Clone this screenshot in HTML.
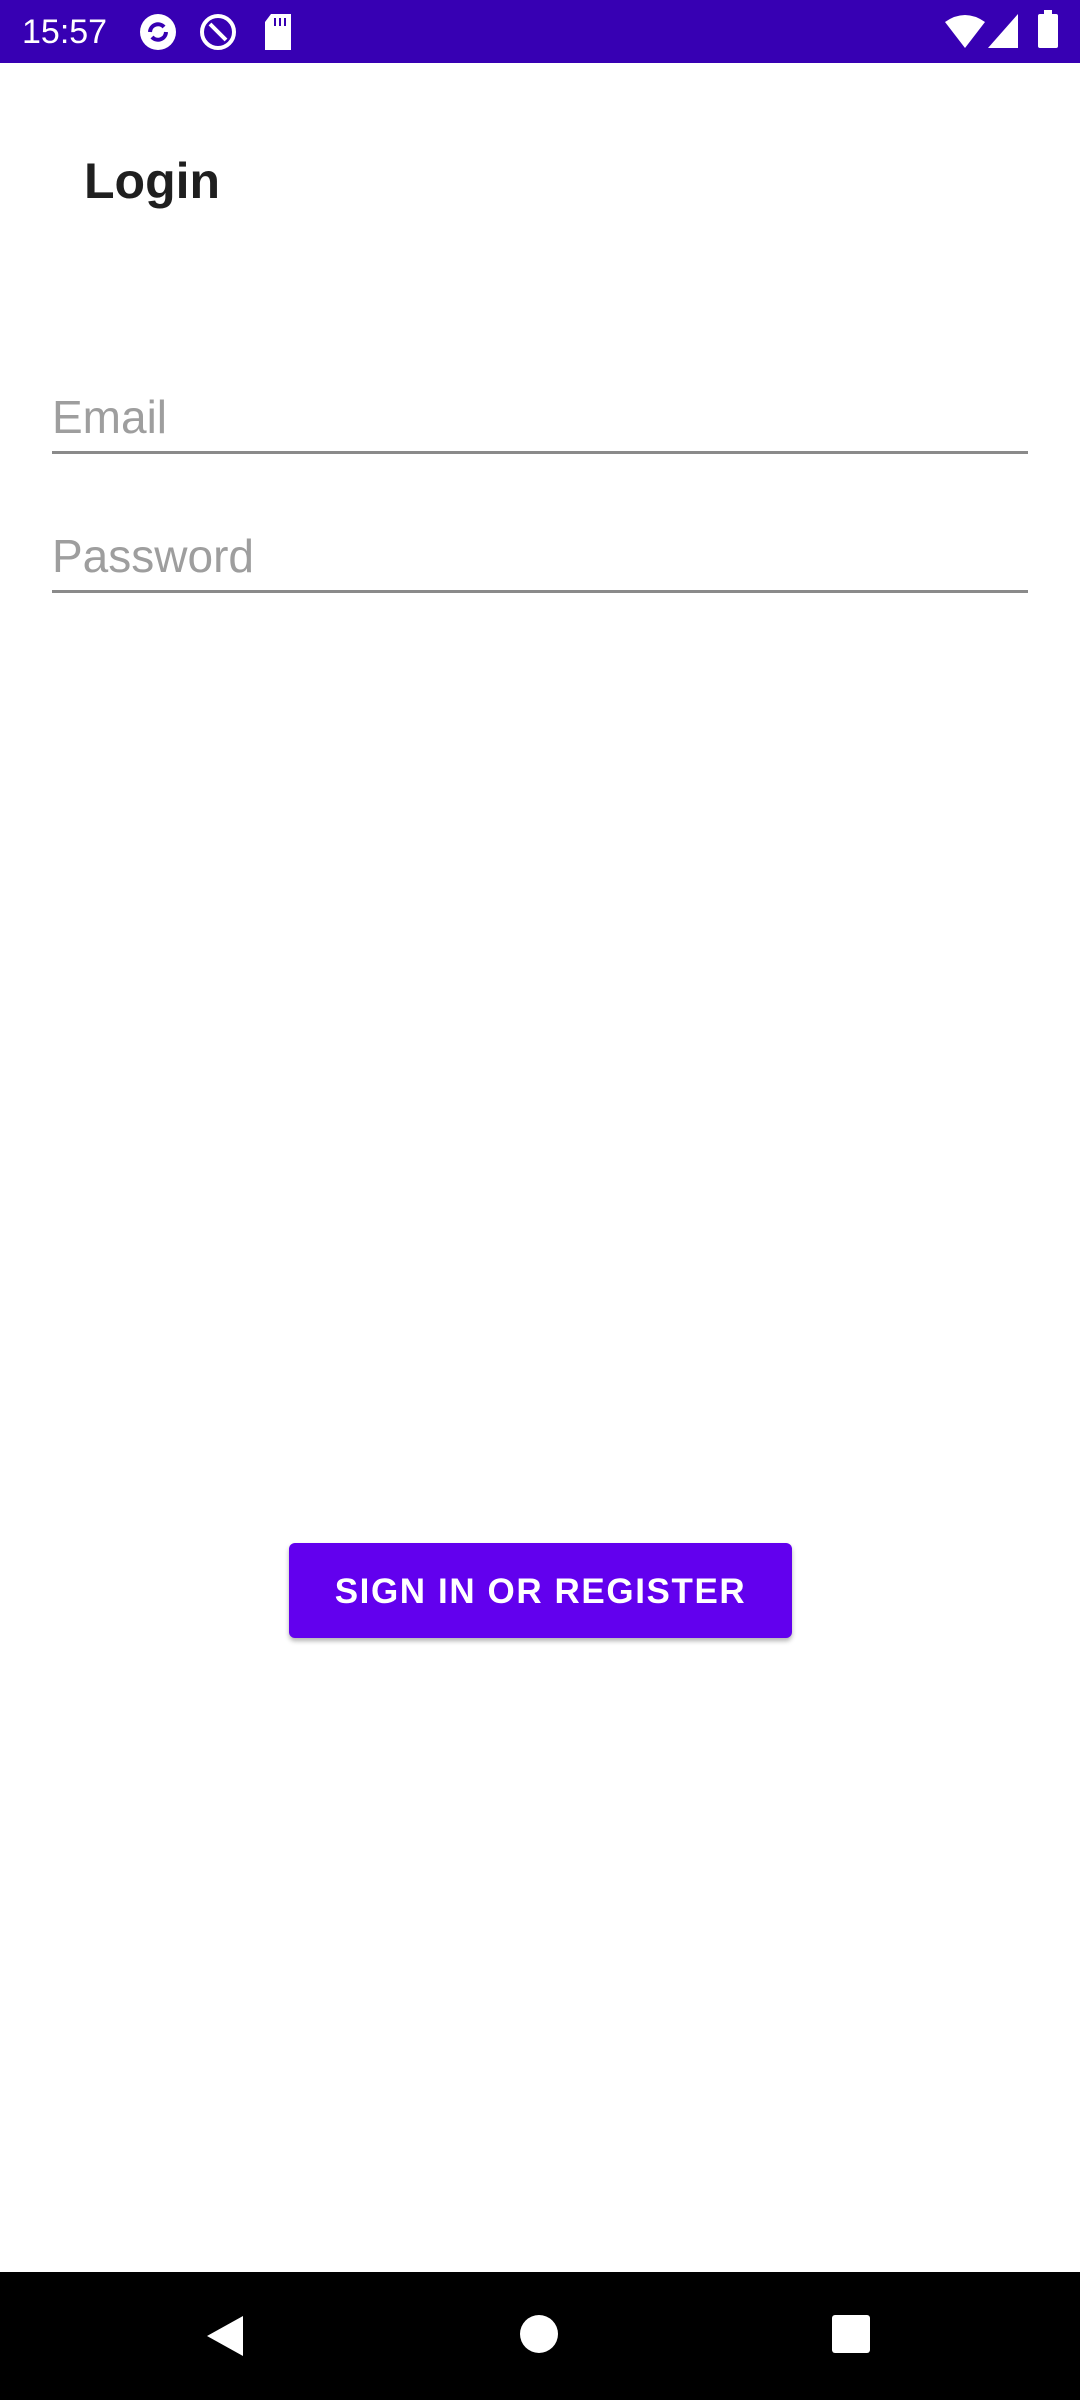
<!DOCTYPE html>
<html><head><meta charset="utf-8"><style>
html,body{margin:0;padding:0;}
body{width:1080px;height:2400px;position:relative;background:#fff;font-family:"Liberation Sans",sans-serif;overflow:hidden;}
.abs{position:absolute;}
.status{left:0;top:0;width:1080px;height:63px;background:#3700B3;color:#fff;}
.t{position:absolute;white-space:nowrap;line-height:1;}
.line{position:absolute;left:52px;width:976px;height:3px;background:#8a8a8a;}
.btn{left:289px;top:1543px;width:503px;height:95px;background:#6200EE;border-radius:6px;box-shadow:0 3px 5px rgba(0,0,0,0.3);color:#fff;font-size:35px;font-weight:bold;letter-spacing:1.6px;display:flex;align-items:center;justify-content:center;padding-top:2px;box-sizing:border-box;}
.nav{left:0;top:2272px;width:1080px;height:128px;background:#000;}
</style></head><body>
<div class="abs status">
  <div class="t" style="left:22px;top:15px;font-size:34px;">15:57</div>
  <svg class="abs" style="left:138px;top:12px" width="40" height="40" viewBox="0 0 40 40"><circle cx="20" cy="20" r="18" fill="#fff"/><path d="M12 20a8 8 0 0 1 14-5M28 20a8 8 0 0 1-14 5" stroke="#3700B3" stroke-width="4" fill="none"/></svg>
  <svg class="abs" style="left:198px;top:12px" width="40" height="40" viewBox="0 0 40 40"><circle cx="20" cy="20" r="16" stroke="#fff" stroke-width="4" fill="none"/><path d="M12 12l16 16" stroke="#fff" stroke-width="4"/></svg>
  <svg class="abs" style="left:263px;top:14px" width="30" height="36" viewBox="0 0 30 36"><path d="M8 0h20v36H2V8z" fill="#fff"/><path d="M12 4v8M17 4v8M22 4v8" stroke="#3700B3" stroke-width="2"/></svg>
  <svg class="abs" style="left:945px;top:14px" width="40" height="34" viewBox="0 0 40 34"><path d="M0 8Q20-6 40 8L20 34z" fill="#fff"/></svg>
  <svg class="abs" style="left:988px;top:14px" width="32" height="34" viewBox="0 0 32 34"><path d="M30 0V34H0z" fill="#fff"/></svg>
  <div class="abs" style="left:1038px;top:14px;width:20px;height:34px;background:#fff;border-radius:2px;"></div>
  <div class="abs" style="left:1044px;top:10px;width:8px;height:5px;background:#fff;"></div>
</div>
<div class="t" style="left:84px;top:156px;font-size:50px;color:#1f1f1f;font-weight:bold;">Login</div>
<div class="t" style="left:52px;top:394px;font-size:46px;color:#9e9e9e;">Email</div>
<div class="line" style="top:451px;"></div>
<div class="t" style="left:52px;top:533px;font-size:46px;color:#9e9e9e;">Password</div>
<div class="line" style="top:590px;"></div>
<div class="abs btn">SIGN IN OR REGISTER</div>
<div class="abs nav">
  <svg class="abs" style="left:205px;top:42px" width="40" height="44" viewBox="0 0 40 44"><path d="M2 22L38 2V42z" fill="#fff"/></svg>
  <div class="abs" style="left:520px;top:43px;width:38px;height:38px;border-radius:50%;background:#fff;"></div>
  <div class="abs" style="left:832px;top:43px;width:38px;height:38px;border-radius:3px;background:#fff;"></div>
</div>
</body></html>
